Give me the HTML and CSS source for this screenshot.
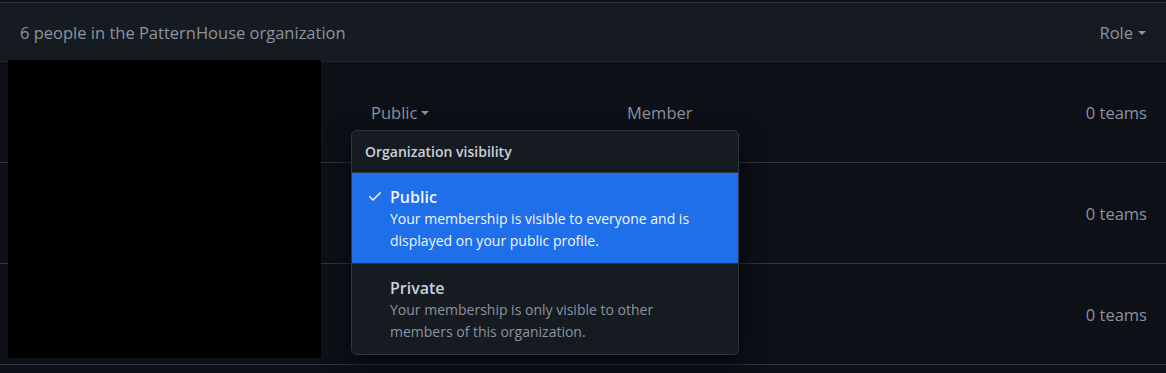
FILE: index.html
```html
<!DOCTYPE html>
<html>
<head>
<meta charset="utf-8">
<link rel="stylesheet" href="styles.css">
</head>
<body>
<div class="box">
  <div class="box-header">
    <span class="count">6 people in the PatternHouse organization</span>
    <span class="role">Role <span class="caret"></span></span>
  </div>
  <div class="rows">
    <div class="row">
      <div class="avatar-col"></div>
      <div class="vis-col">
        <span class="vis">Public <span class="caret"></span></span>
        <div class="menu">
          <div class="menu-header">Organization visibility</div>
          <div class="menu-item selected">
            <svg class="check" width="16" height="16" viewBox="0 0 16 16"><path fill="currentColor" d="M13.78 4.22a.75.75 0 0 1 0 1.06l-7.25 7.25a.75.75 0 0 1-1.06 0L2.22 9.28a.75.75 0 0 1 1.06-1.06L6 10.94l6.72-6.72a.75.75 0 0 1 1.06 0Z"/></svg>
            <div class="item-body">
              <div class="item-title">Public</div>
              <div class="item-desc">Your membership is visible to everyone and is displayed on your public profile.</div>
            </div>
          </div>
          <div class="menu-item">
            <span class="check-space"></span>
            <div class="item-body">
              <div class="item-title">Private</div>
              <div class="item-desc">Your membership is only visible to other members of this organization.</div>
            </div>
          </div>
        </div>
      </div>
      <div class="role-col">Member</div>
      <div class="teams-col">0 teams</div>
    </div>
    <div class="row">
      <div class="avatar-col"></div>
      <div class="vis-col"></div>
      <div class="role-col"></div>
      <div class="teams-col">0 teams</div>
    </div>
    <div class="row">
      <div class="avatar-col"></div>
      <div class="vis-col"></div>
      <div class="role-col"></div>
      <div class="teams-col">0 teams</div>
    </div>
    <div class="redact"></div>
  </div>
</div>
</body>
</html>
```
FILE: styles.css
```css
html, body {
  margin: 0;
  padding: 0;
  background: #0d1117;
  height: 373px;
  overflow: hidden;
}
body {
  font-family: "Open Sans", "Noto Sans", sans-serif;
  color: #c9d1d9;
  padding-top: 2px;
}
.box {
  border-top: 1px solid #30363d;
}
.box-header {
  background: #161b22;
  height: 58px;
  display: flex;
  align-items: center;
  justify-content: space-between;
  padding: 0 20px;
  font-size: 16.5px;
  color: #8b949e;
  border-bottom: 1px solid #21262d;
}
.role { display: flex; align-items: center; gap: 5px; }
.caret {
  display: inline-block;
  width: 0;
  height: 0;
  border-left: 4px solid transparent;
  border-right: 4px solid transparent;
  border-top: 4px solid currentColor;
  margin-top: 2px;
}
.rows { position: relative; }
.row {
  height: 100px;
  border-bottom: 1px solid #30363d;
  display: flex;
  align-items: center;
  font-size: 16.5px;
  color: #8b949e;
}
.avatar-col { width: 371px; }
.vis-col { width: 256px; position: relative; height: 100%; display: flex; align-items: center; }
.vis { display: flex; align-items: center; gap: 4px; }
.role-col { flex: 1; }
.teams-col { padding-right: 19px; }
.redact {
  position: absolute;
  left: 8px;
  top: -2px;
  width: 313px;
  height: 298px;
  background: #000;
}
.menu {
  position: absolute;
  left: -20px;
  top: 68px;
  width: 386px;
  background: #161b22;
  border: 1px solid #30363d;
  border-radius: 6px;
  overflow: hidden;
  z-index: 5;
  box-shadow: 0 8px 24px rgba(1, 4, 9, 0.85);
}
.menu-header {
  height: 41px;
  display: flex;
  align-items: center;
  padding-left: 13px;
  font-size: 14px;
  font-weight: 600;
  color: #c9d1d9;
  border-bottom: 1px solid #30363d;
}
.menu-item {
  display: flex;
  padding: 13px 16px 11px 15px;
  height: 66px;
  color: #8b949e;
  border-bottom: 1px solid #21262d;
}
.menu-item:last-child { border-bottom: 0; }
.menu-item.selected {
  background: #1f6feb;
  color: #f0f6fc;
  border-bottom-color: #30363d;
}
.check { width: 16px; height: 16px; margin-right: 7px; margin-top: 2px; flex: none; }
.check-space { width: 16px; margin-right: 7px; flex: none; }
.item-title {
  font-size: 16px;
  font-weight: 600;
  line-height: 22px;
  color: #c9d1d9;
}
.selected .item-title { color: #f0f6fc; }
.item-desc {
  font-size: 14px;
  line-height: 22px;
  width: 310px;
}
```
